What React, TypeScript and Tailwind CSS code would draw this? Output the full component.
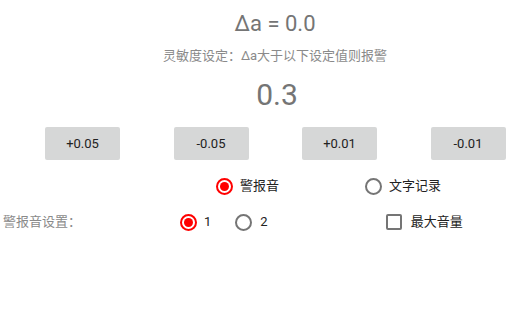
const font = { fontFamily: 'Roboto, "Noto Sans CJK SC", sans-serif' };

function Radio({ checked }: { checked: boolean }) {
  return (
    <span
      className={
        'flex h-[17px] w-[17px] items-center justify-center rounded-full border-2 ' +
        (checked ? 'border-[#ff0000]' : 'border-[#757575]')
      }
    >
      {checked && <span className="h-[9px] w-[9px] rounded-full bg-[#ff0000]" />}
    </span>
  );
}

const steps = ['+0.05', '-0.05', '+0.01', '-0.01'];

export default function App() {
  return (
    <div className="h-[325px] w-[528px] bg-white text-[#757575]" style={font}>
      <div className="flex flex-col items-center pl-[22px]">
        <div className="mt-[9px] h-[30px] text-[22px] leading-[30px]">Δa = 0.0</div>
        <div className="mt-[9px] text-[13px] leading-[16px] text-[#8a8a8a]">
          灵敏度设定：Δa大于以下设定值则报警
        </div>
        <div className="mt-[13px] pl-[4px] text-[30px] leading-[36px]">0.3</div>
      </div>

      {/* step buttons */}
      <div className="mt-[14px] flex gap-[53.5px] pl-[45px]">
        {steps.map((s) => (
          <button
            key={s}
            className="h-[33px] w-[75px] rounded-[2px] bg-[#d6d7d7] text-[13px] text-[#222]"
          >
            {s}
          </button>
        ))}
      </div>

      {/* mode */}
      <div className="mt-[17px] flex h-[18px] items-center pl-[216px] text-[13px] text-[#222]">
        <div className="flex items-center gap-[7px]">
          <Radio checked />
          <span>警报音</span>
        </div>
        <div className="ml-[86px] flex items-center gap-[7px]">
          <Radio checked={false} />
          <span>文字记录</span>
        </div>
      </div>

      {/* alarm settings */}
      <div className="mt-[18px] flex h-[18px] items-center text-[13px]">
        <span className="w-[180px] pl-[3px] text-[#8a8a8a]">警报音设置：</span>
        <div className="flex items-center gap-[7px] text-[#222]">
          <Radio checked />
          <span>1</span>
        </div>
        <div className="ml-[24px] flex items-center gap-[8px] text-[#222]">
          <Radio checked={false} />
          <span>2</span>
        </div>
        <div className="ml-[118px] flex items-center gap-[9px] text-[#222]">
          <span className="h-[16px] w-[16px] rounded-[2px] border-2 border-[#757575]" />
          <span>最大音量</span>
        </div>
      </div>
    </div>
  );
}
